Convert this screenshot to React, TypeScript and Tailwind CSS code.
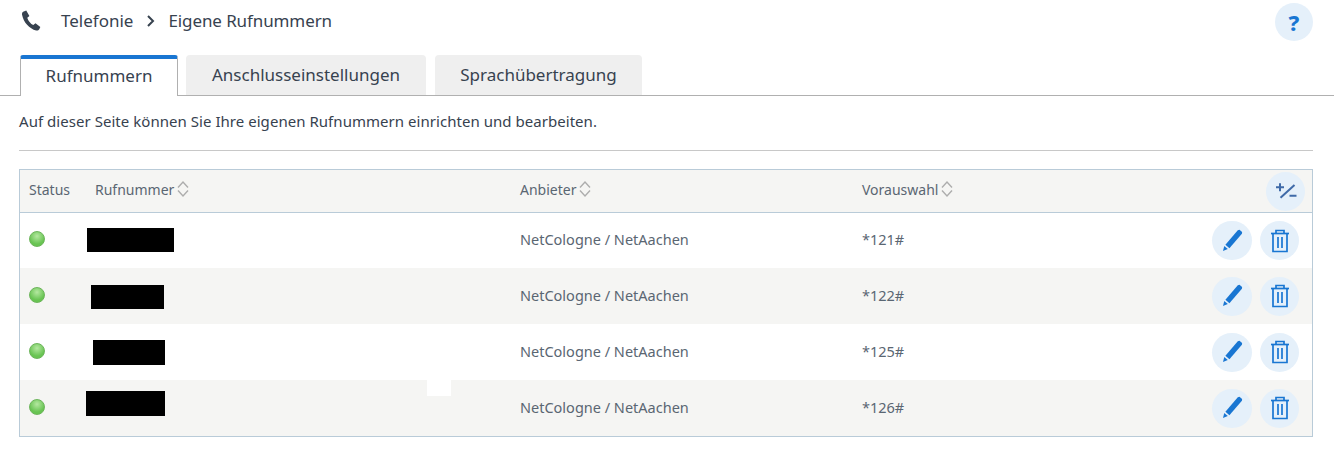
const rows = [
  { block: "ml-[-8px] mb-[1px] w-[87px] h-[24px]", code: "*121#", bg: "bg-white", h: "h-[55px]", shift: "mb-[3px]", textShift: "mb-[2px]" },
  { block: "ml-[-4px] mt-[2px] w-[73px] h-[24px]", code: "*122#", bg: "bg-[#f5f5f3]", h: "h-[56px]", shift: "mb-[2px]", textShift: "mb-[1px]" },
  { block: "ml-[-2px] w-[72px] h-[25px]", code: "*125#", bg: "bg-white", h: "h-[56px]", shift: "mb-[2px]", textShift: "mb-[1px]" },
  { block: "ml-[-9px] mb-[9px] w-[79px] h-[25px]", code: "*126#", bg: "bg-[#f5f5f3]", h: "h-[56px]", shift: "mb-[2px]", textShift: "mb-[1px]" },
];

function SortIcon() {
  return (
    <svg width="12" height="18" viewBox="0 0 12 18" fill="none" stroke="#adadad" strokeWidth="1.4" className="ml-[3px]">
      <path d="M1 7.500l5-5.500 5 5.500" />
      <path d="M1 10.500l5 5.500 5-5.500" />
    </svg>
  );
}

function PhoneIcon() {
  return (
    <svg width="21" height="21" viewBox="0 0 20 20" fill="#37424f">
      <path d="M2 1.600 5 .4l3 5.300-2 1.600c.6 2.600 3.400 6 5.700 7l2.100-1.700 4.600 3.700-1 2.100c-.6 1-1.800 1.400-3 1.100C8 17.800 2.400 11.800 1 4.500c-.2-1.200.2-2.300 1-2.900z" />
    </svg>
  );
}

function PencilIcon() {
  return (
    <svg width="24" height="24" viewBox="0 0 24 24" fill="#1976d2">
      <path d="M17.800 1.200 19.500.8l2.600 2.300-.2 1.700L9.400 19.200 5.400 15.700z" />
      <path d="M3 22l1.300-5 3.500 3.100z" />
    </svg>
  );
}

function TrashIcon() {
  return (
    <svg width="20" height="24" viewBox="0 0 20 24" fill="none" stroke="#1976d2" strokeWidth="1.700">
      <path d="M6 4V1.500h8V4" />
      <path d="M1 4.500h18" />
      <path d="M3 4.500V22.500h14V4.500" />
      <path d="M8 8v11M12 8v11" />
    </svg>
  );
}

function Header({ label, sort = true }: { label: string; sort?: boolean }) {
  return (
    <div className="mb-[4px] flex items-center text-[14px] text-[#5a6672]">
      <span>{label}</span>
      {sort && <SortIcon />}
    </div>
  );
}

export default function App() {
  return (
    <div className="relative h-[462px] w-[1334px] bg-white text-[#37424f] font-['Noto_Sans','Open_Sans',sans-serif]">
      <div className="flex h-[55px] items-start justify-between pl-[21px] pr-[21px]">
        <div className="mt-[8px] flex items-center text-[17px]">
          <PhoneIcon />
          <span className="ml-[19px]">Telefonie</span>
          <svg width="10" height="14" viewBox="0 0 10 14" fill="none" stroke="#37424f" strokeWidth="2" className="ml-[13px]">
            <path d="M2 2l5 5-5 5" />
          </svg>
          <span className="ml-[12px] tracking-[-0.1px]">Eigene Rufnummern</span>
        </div>
        <button className="mt-[3px] flex h-[38px] w-[38px] items-center justify-center rounded-full bg-[#e5f0fa] text-[22px] font-extrabold text-[#1976d2]">
          ?
        </button>
      </div>

      <div className="flex h-[41px] items-end gap-[8px] border-b border-[#b0b0b0] pl-[20px] text-[17px]">
        <div className="-mb-px flex h-[41px] w-[158px] items-center justify-center rounded-t-[3px] border-x border-t-[4px] border-x-[#b0b0b0] border-t-[#1976d2] bg-white pb-[4px]">
          Rufnummern
        </div>
        <div className="flex h-[40px] w-[240px] items-center justify-center rounded-t-[4px] bg-[#efefef]">
          Anschlusseinstellungen
        </div>
        <div className="ml-px flex h-[40px] w-[207px] items-center justify-center rounded-t-[4px] bg-[#efefef]">
          Sprachübertragung
        </div>
      </div>

      <p className="ml-[19px] mt-[15px] text-[15px] leading-[20px] tracking-[0.04px]">
        Auf dieser Seite können Sie Ihre eigenen Rufnummern einrichten und bearbeiten.
      </p>

      <div className="ml-[19px] mt-[19px] w-[1294px] border-t border-[#c8c8c8]" />

      <div className="ml-[19px] mt-[18px] w-[1294px] border border-[#b9cbd8]">
        <div className="grid h-[43px] grid-cols-[66px_425px_342px_1fr] items-center border-b border-[#b9cbd8] bg-[#f5f5f3] pl-[9px] pr-[7px]">
          <Header label="Status" sort={false} />
          <Header label="Rufnummer" />
          <Header label="Anbieter" />
          <div className="flex items-center justify-between">
            <Header label="Vorauswahl" />
            <button className="flex h-[39px] w-[39px] items-center justify-center rounded-full bg-[#e5f0fa]">
              <svg width="22" height="18" viewBox="0 0 22 18" fill="none" stroke="#3f6aa8" strokeWidth="2">
                <path d="M1 5.300h8M5 1.300v8M5.500 15.700 19.500 3M14.500 13.700h7" />
              </svg>
            </button>
          </div>
        </div>

        {rows.map((row) => (
          <div
            key={row.code}
            className={`grid grid-cols-[66px_425px_342px_1fr] items-center pl-[9px] pr-[13px] text-[14.5px] text-[#5a6672] ${row.h} ${row.bg}`}
          >
            <div className={`h-[16px] w-[16px] rounded-full border border-[#6cb55a] bg-[radial-gradient(circle_at_50%_30%,#b4e8a0,#68c452_65%)] ${row.shift}`} />
            <div className={`bg-black ${row.block}`} />
            <div className={row.textShift}>NetCologne / NetAachen</div>
            <div className="flex items-center justify-between">
              <span className={row.textShift}>{row.code}</span>
              <div className="flex gap-[8px]">
                <button className="flex h-[39px] w-[40px] items-center justify-center rounded-full bg-[#e5f0fa]">
                  <PencilIcon />
                </button>
                <button className="flex h-[39px] w-[39px] items-center justify-center rounded-full bg-[#e5f0fa]">
                  <TrashIcon />
                </button>
              </div>
            </div>
          </div>
        ))}
      </div>

      <div className="absolute left-[427px] top-[380px] h-[16px] w-[24px] bg-white" />
    </div>
  );
}
